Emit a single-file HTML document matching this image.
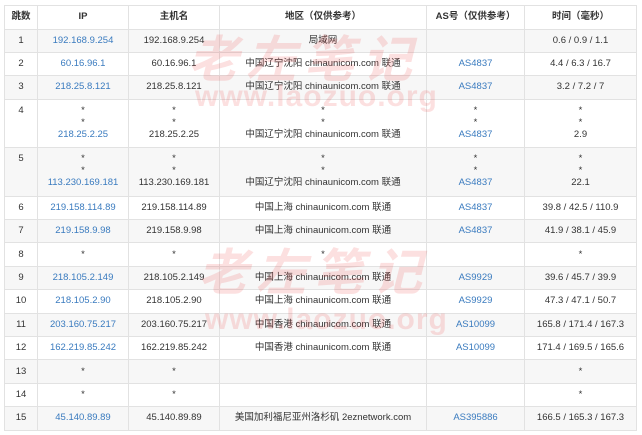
<!DOCTYPE html><html><head><meta charset="utf-8"><style>
body{margin:0;background:#fff;width:642px;height:435px;overflow:hidden;position:relative;font-family:"Liberation Sans","Noto Sans CJK SC",sans-serif;font-size:9.5px;color:#333}
table{position:absolute;left:4px;top:5px;border-collapse:collapse;width:632px;table-layout:fixed}
td,th{border:1px solid #e2e2e2;text-align:center;padding:0;line-height:12px}
th{height:22.5px;font-weight:bold;font-size:9.5px}
td{height:22.4px}
tr.g td{background:#f7f7f7}
td.t{height:42.5px;vertical-align:top;padding-top:5px}
td.t0{vertical-align:top;padding-top:5px}
.b{color:#3a7bbf}
.wm{position:absolute;color:rgba(235,60,60,0.16);font-weight:bold;font-style:italic;white-space:nowrap;font-family:"Noto Sans CJK SC",sans-serif}
.w2{position:absolute;color:rgba(235,60,60,0.16);font-weight:bold;white-space:nowrap;font-family:"Liberation Sans",sans-serif;letter-spacing:1px}
</style></head><body>
<table>
<colgroup><col style="width:33px"><col style="width:91px"><col style="width:91px"><col style="width:207px"><col style="width:98px"><col style="width:112px"></colgroup>
<tr><th>跳数</th><th>IP</th><th>主机名</th><th>地区（仅供参考）</th><th>AS号（仅供参考）</th><th>时间（毫秒）</th></tr>
<tr class="g"><td>1</td><td class="b">192.168.9.254</td><td>192.168.9.254</td><td>局域网</td><td></td><td>0.6 / 0.9 / 1.1</td></tr>
<tr><td>2</td><td class="b">60.16.96.1</td><td>60.16.96.1</td><td>中国辽宁沈阳 chinaunicom.com 联通</td><td class="b">AS4837</td><td>4.4 / 6.3 / 16.7</td></tr>
<tr class="g"><td>3</td><td class="b">218.25.8.121</td><td>218.25.8.121</td><td>中国辽宁沈阳 chinaunicom.com 联通</td><td class="b">AS4837</td><td>3.2 / 7.2 / 7</td></tr>
<tr><td class="t">4</td><td class="t0">*<br>*<br><span class="b">218.25.2.25</span></td><td class="t0">*<br>*<br>218.25.2.25</td><td class="t0">*<br>*<br>中国辽宁沈阳 chinaunicom.com 联通</td><td class="t0">*<br>*<br><span class="b">AS4837</span></td><td class="t0">*<br>*<br>2.9</td></tr>
<tr class="g"><td class="t">5</td><td class="t0">*<br>*<br><span class="b">113.230.169.181</span></td><td class="t0">*<br>*<br>113.230.169.181</td><td class="t0">*<br>*<br>中国辽宁沈阳 chinaunicom.com 联通</td><td class="t0">*<br>*<br><span class="b">AS4837</span></td><td class="t0">*<br>*<br>22.1</td></tr>
<tr><td>6</td><td class="b">219.158.114.89</td><td>219.158.114.89</td><td>中国上海 chinaunicom.com 联通</td><td class="b">AS4837</td><td>39.8 / 42.5 / 110.9</td></tr>
<tr class="g"><td>7</td><td class="b">219.158.9.98</td><td>219.158.9.98</td><td>中国上海 chinaunicom.com 联通</td><td class="b">AS4837</td><td>41.9 / 38.1 / 45.9</td></tr>
<tr><td>8</td><td>*</td><td>*</td><td>*</td><td></td><td>*</td></tr>
<tr class="g"><td>9</td><td class="b">218.105.2.149</td><td>218.105.2.149</td><td>中国上海 chinaunicom.com 联通</td><td class="b">AS9929</td><td>39.6 / 45.7 / 39.9</td></tr>
<tr><td>10</td><td class="b">218.105.2.90</td><td>218.105.2.90</td><td>中国上海 chinaunicom.com 联通</td><td class="b">AS9929</td><td>47.3 / 47.1 / 50.7</td></tr>
<tr class="g"><td>11</td><td class="b">203.160.75.217</td><td>203.160.75.217</td><td>中国香港 chinaunicom.com 联通</td><td class="b">AS10099</td><td>165.8 / 171.4 / 167.3</td></tr>
<tr><td>12</td><td class="b">162.219.85.242</td><td>162.219.85.242</td><td>中国香港 chinaunicom.com 联通</td><td class="b">AS10099</td><td>171.4 / 169.5 / 165.6</td></tr>
<tr class="g"><td>13</td><td>*</td><td>*</td><td></td><td></td><td>*</td></tr>
<tr><td>14</td><td>*</td><td>*</td><td></td><td></td><td>*</td></tr>
<tr class="g"><td>15</td><td class="b">45.140.89.89</td><td>45.140.89.89</td><td>美国加利福尼亚州洛杉矶 2eznetwork.com</td><td class="b">AS395886</td><td>166.5 / 165.3 / 167.3</td></tr>
</table>
<div class="wm" style="left:188px;top:20px;font-size:50px;letter-spacing:8px">老左笔记</div>
<div class="w2" style="left:195px;top:80px;font-size:30px">www.laozuo.org</div>
<div class="wm" style="left:198px;top:233px;font-size:50px;letter-spacing:8px">老左笔记</div>
<div class="w2" style="left:205px;top:303px;font-size:30px">www.laozuo.org</div>
</body></html>
